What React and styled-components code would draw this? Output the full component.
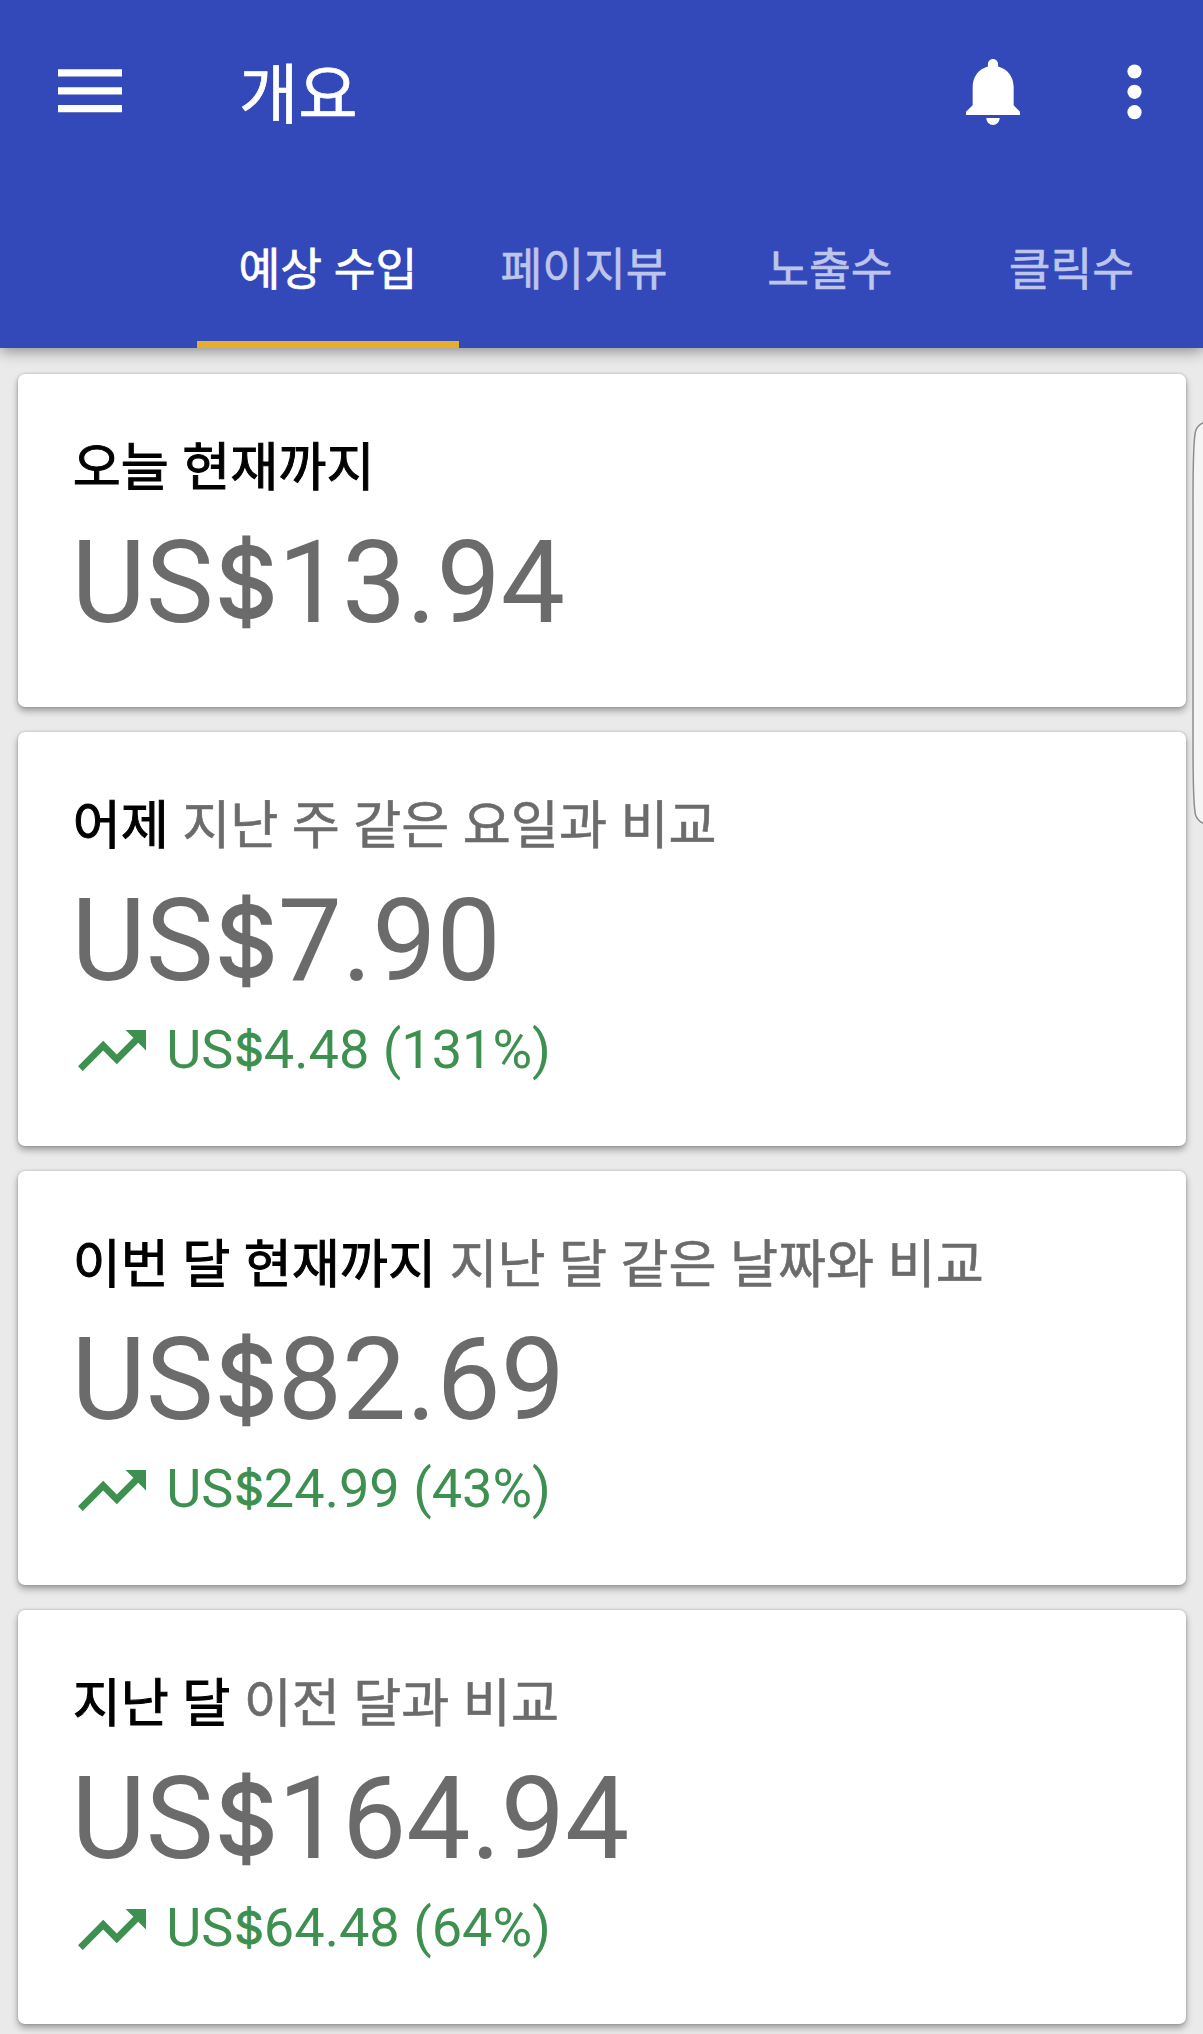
import styled, { createGlobalStyle } from 'styled-components';

const tabs = ['예상 수입', '페이지뷰', '노출수', '클릭수'];

const reports = [
  { id: 'today', title: '오늘 현재까지', amount: '13.94' },
  {
    id: 'yesterday',
    title: '어제',
    compare: '지난 주 같은 요일과 비교',
    amount: '7.90',
    delta: '4.48 (131%)',
  },
  {
    id: 'month',
    title: '이번 달 현재까지',
    compare: '지난 달 같은 날짜와 비교',
    amount: '82.69',
    delta: '24.99 (43%)',
  },
  {
    id: 'lastMonth',
    title: '지난 달',
    compare: '이전 달과 비교',
    amount: '164.94',
    delta: '64.48 (64%)',
  },
];

const App = () => {
  return (
    <Page>
      <GlobalStyle />
      <Header>
        <Toolbar>
          <IconButton aria-label="menu">
            <MenuIcon />
          </IconButton>
          <Title>개요</Title>
          <Actions>
            <IconButton aria-label="notifications">
              <BellIcon />
            </IconButton>
            <IconButton aria-label="more">
              <MoreIcon />
            </IconButton>
          </Actions>
        </Toolbar>
        <Tabs>
          {tabs.map((tab, index) => (
            <Tab key={tab} $active={index === 0}>
              {tab}
            </Tab>
          ))}
        </Tabs>
      </Header>
      <Reports>
        {reports.map((report) => (
          <ReportCard
            title={report.title}
            compare={report.compare}
            amount={report.amount}
            delta={report.delta}
            key={report.id}
          ></ReportCard>
        ))}
      </Reports>
      <EdgeHandle />
    </Page>
  );
};

const ReportCard = ({ title, compare, amount, delta }) => {
  return (
    <Card>
      <CardTitle>
        {title}
        {compare && <Compare> {compare}</Compare>}
      </CardTitle>
      <Amount>
        US<Dollar>$</Dollar>
        {amount}
      </Amount>
      {delta && (
        <Delta>
          <TrendIcon />
          <DeltaText>
            US<Dollar>$</Dollar>
            {delta}
          </DeltaText>
        </Delta>
      )}
    </Card>
  );
};

const MenuIcon = () => (
  <svg width="64" height="44" viewBox="0 0 64 44" fill="#fff">
    <path d="M0 0.3h64v7.3H0zM0 18.3h64v7.3H0zM0 36h64v7.3H0z" />
  </svg>
);

const BellIcon = () => (
  <svg
    width="54"
    height="66"
    viewBox="3 2 17 20"
    preserveAspectRatio="none"
    fill="#fff"
  >
    <path d="M11.5 22c1.1 0 2.1-.9 2.1-2.1h-4.2c0 1.2 1 2.1 2.1 2.1zM18 16v-5.5c0-3.07-2-5.5-4.9-6.2v-.8c0-.83-.77-1.5-1.6-1.5s-1.6.67-1.6 1.5v.8C7 5 5.1 7.43 5.1 10.5V16L3 18v1h17v-1z" />
  </svg>
);

const MoreIcon = () => (
  <svg width="15" height="56" viewBox="0 0 15 56" fill="#fff">
    <circle cx="7.5" cy="7.5" r="7.1" />
    <circle cx="7.5" cy="27.8" r="7.1" />
    <circle cx="7.5" cy="48.2" r="7.1" />
  </svg>
);

const TrendIcon = () => (
  <svg
    width="68"
    height="41"
    viewBox="2 6 20 12"
    preserveAspectRatio="none"
    fill="#3e9050"
  >
    <path d="M16 6l2.29 2.29-4.88 4.88-4-4L2 16.59 3.41 18l6-6 4 4 6.3-6.29L22 12V6z" />
  </svg>
);

const EdgeHandle = () => (
  <HandleSvg width="11" height="402" viewBox="0 0 11 402">
    <path
      d="M12 0.5C8 2 5 5 3.6 9C1.4 17 1 40 1 80V322C1 362 1.4 385 3.6 393C5 397 8 400 12 401.5"
      fill="#f5f5f5"
      stroke="#8e8e8e"
      strokeWidth="1.5"
    />
  </HandleSvg>
);

const GlobalStyle = createGlobalStyle`
  body {
    margin: 0;
    background: #eaeaea;
    font-family: 'Noto Sans CJK KR', sans-serif;
  }
`;

const Page = styled.div`
  position: relative;
  height: 2034px;
  overflow: hidden;
  background: #eaeaea;
`;

const Header = styled.header`
  position: relative;
  box-sizing: border-box;
  height: 347.5px;
  background: #3349ba;
  box-shadow: 0 3px 14px rgba(0, 0, 0, 0.42);
`;

const Toolbar = styled.div`
  box-sizing: border-box;
  display: flex;
  align-items: center;
  height: 182px;
  padding: 0 61px 0 57.5px;
`;

const IconButton = styled.button`
  display: grid;
  padding: 0;
  border: 0;
  background: none;
`;

const Title = styled.h1`
  margin: 0 0 3px 117.5px;
  color: #fff;
  font-size: 64.5px;
  font-weight: 400;
  line-height: 80px;
  -webkit-text-stroke: 0.7px;
`;

const Actions = styled.div`
  display: flex;
  align-items: center;
  gap: 107px;
  margin: 2px 0 0 auto;
`;

const Tabs = styled.nav`
  display: flex;
  height: 165.5px;
  padding-left: 197px;
`;

const Tab = styled.div`
  box-sizing: border-box;
  min-width: 241.5px;
  padding: 48.5px 41.6px 0;
  border-bottom: 7px solid ${({ $active }) => ($active ? '#e6af2b' : 'transparent')};
  color: ${({ $active }) => ($active ? '#fff' : '#bdc6ea')};
  font-size: 45.4px;
  line-height: 70px;
  text-align: center;
  white-space: nowrap;
  word-spacing: 1.5px;
  -webkit-text-stroke: ${({ $active }) => ($active ? '0.7px' : '0.6px')};
`;

const Reports = styled.main`
  display: grid;
  gap: 25.2px;
  padding: 26.2px 17px 0 18px;
`;

const Card = styled.section`
  padding: 59px 53.5px 56px;
  border-radius: 7px;
  background: #fff;
  box-shadow:
    0 0 3px rgba(0, 0, 0, 0.2),
    0 4px 7px rgba(0, 0, 0, 0.33);
`;

const CardTitle = styled.h2`
  margin: 0 0 0 1.2px;
  color: #000;
  font-size: 52.25px;
  font-weight: 400;
  line-height: 60px;
  white-space: nowrap;
  word-spacing: 1.7px;
  -webkit-text-stroke: 1px;
`;

const Compare = styled.span`
  color: #6b6b6b;
  -webkit-text-stroke: 0.6px;
`;

const Amount = styled.div`
  margin-top: 22px;
  color: #6b6b6b;
  font-family: Roboto, sans-serif;
  font-size: 114.4px;
  line-height: 136px;
`;

// the currency sign is heavier than the digits, with a full bar
const Dollar = styled.span`
  display: inline-block;
  width: 0.668em;
  font-family: Inter, sans-serif;
  font-size: 0.84em;
  line-height: 0;
  text-align: center;
  text-indent: 0.015em;
  vertical-align: 0.045em;
  -webkit-text-stroke: 0.024em;
`;

const Delta = styled.div`
  box-sizing: border-box;
  display: flex;
  align-items: center;
  height: 81px;
  padding: 3px 0 0 6.8px;
`;

const DeltaText = styled.span`
  margin: 0 0 2px 20px;
  color: #3e9050;
  font-family: Roboto, sans-serif;
  font-size: 54.1px;
  line-height: 60px;
`;

const HandleSvg = styled.svg`
  position: absolute;
  top: 422px;
  right: 0;
`;

export default App;
